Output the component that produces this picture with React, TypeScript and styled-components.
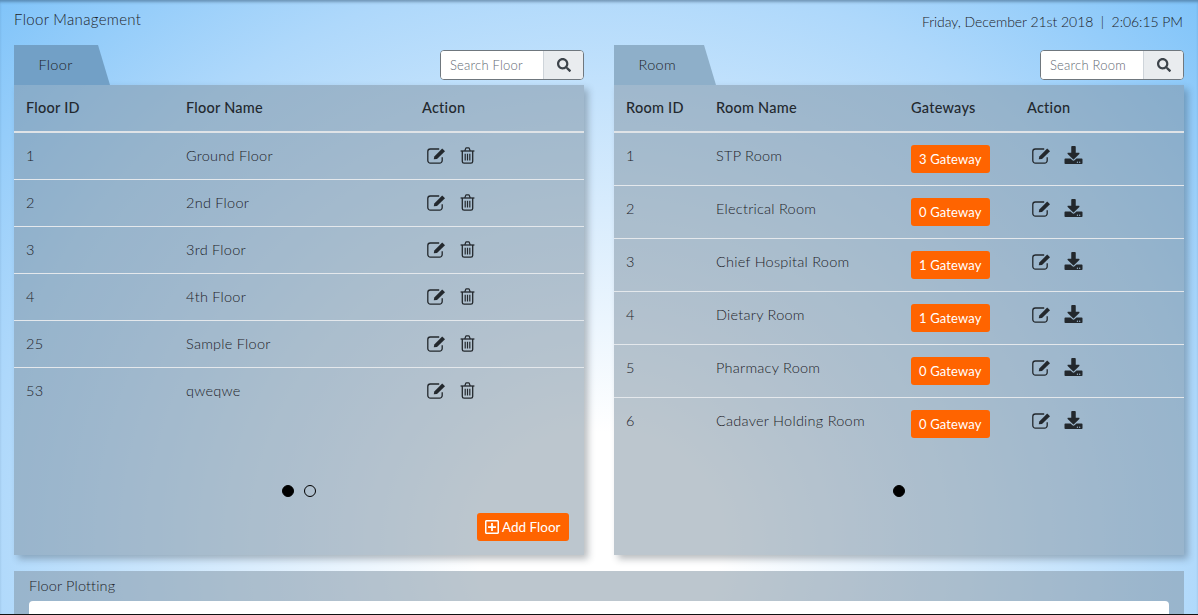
import React from "react";
import styled, { createGlobalStyle } from "styled-components";
import { FaDownload, FaSearch, FaRegPlusSquare } from "react-icons/fa";

const Global = createGlobalStyle`
  html, body { margin: 0; padding: 0; height: 615px; overflow: hidden; }
  body { font-family: "Lato", "Open Sans", sans-serif; color: #1d2329; }
  * { box-sizing: border-box; }
`;

const Page = styled.div`
  height: 615px;
  display: flex;
  flex-direction: column;
  overflow: hidden;
  padding-top: 10px;
  background: radial-gradient(ellipse 860px 800px at 599px 545px, #ffffff 0%, #ffffff 14%, #d8ecfd 42%, #aed8fb 72%, #7cc2f9 100%);
  box-shadow: inset 0 3px 3px -1px rgba(40, 70, 100, 0.45);
`;

const TopBar = styled.header`
  display: flex;
  justify-content: space-between;
  height: 35px;
  padding: 0 15px 0 14px;
`;

const PageTitle = styled.h1`
  margin: 0;
  font-size: 15px;
  line-height: 18px;
  font-weight: 300;
  letter-spacing: 0.32px;
`;

const DateText = styled.div`
  margin-top: 3px;
  font-size: 14px;
  line-height: 18px;
  font-weight: 300;
  letter-spacing: -0.05px;
  white-space: pre;
`;

const Columns = styled.div`
  display: grid;
  grid-template-columns: 570px 570px;
  column-gap: 30px;
  padding: 0 14px;
  height: 510px;
`;

const Column = styled.section`
  display: flex;
  flex-direction: column;
`;

const TabRow = styled.div`
  display: flex;
  justify-content: space-between;
  height: 40px;
`;

const Tab = styled.div<{ $w: number; $active?: boolean }>`
  width: ${(p) => p.$w}px;
  height: 40px;
  padding-left: 24.5px;
  font-size: 14.5px;
  font-weight: 300;
  line-height: 40px;
  letter-spacing: 0.3px;
  background: ${(p) => (p.$active ? "#72a0c6" : "#8eafc9")};
  clip-path: polygon(0 0, calc(100% - 12px) 0, 100% 100%, 0 100%);
`;

const Search = styled.div`
  display: flex;
  width: 144px;
  height: 30px;
  margin-top: 5px;
  border: 1px solid #6f777e;
  border-radius: 4px;
  overflow: hidden;
  background: #fff;
`;

const SearchInput = styled.input`
  flex: 1;
  min-width: 0;
  border: 0;
  outline: 0;
  padding: 0 9px;
  font-family: inherit;
  font-size: 13px;
  font-weight: 300;
  letter-spacing: 0.22px;
  &::placeholder { color: #5f6973; opacity: 1; }
`;

const SearchButton = styled.button`
  width: 40px;
  border: 0;
  border-left: 1px solid #ced4da;
  background: #e9ecef;
  color: #3d444b;
  display: flex;
  align-items: center;
  justify-content: center;
  font-size: 14px;
  padding: 0;
`;

const Panel = styled.div`
  flex: 1;
  display: flex;
  flex-direction: column;
  background: rgba(128, 147, 162, 0.53);
  box-shadow: 4px 4px 7px rgba(40, 50, 60, 0.32);
`;

const TableArea = styled.div`
  height: 400px;
`;

const HeadRow = styled.div<{ $cols: string }>`
  display: grid;
  grid-template-columns: ${(p) => p.$cols};
  align-items: center;
  height: 48px;
  padding-bottom: 2px;
  border-bottom: 2px solid #dfe3e7;
  font-size: 14.5px;
  font-weight: 500;
  letter-spacing: 0.25px;
  color: #23292f;
`;

const Row = styled.div<{ $cols: string; $h: number }>`
  display: grid;
  grid-template-columns: ${(p) => p.$cols};
  align-items: start;
  height: ${(p) => p.$h}px;
  padding-top: 14px;
  border-bottom: 1px solid #e4e8ec;
  font-size: 14.5px;
  line-height: 18px;
  font-weight: 300;
  letter-spacing: 0.25px;
  &:last-child { border-bottom: 0; }
`;

const Cell = styled.div`
  padding-left: 12px;
  white-space: nowrap;
`;

const BadgeCell = styled(Cell)`
  display: flex;
  height: 18px;
`;

const Actions = styled.div<{ $gap: number; $left: number }>`
  display: flex;
  align-items: center;
  gap: ${(p) => p.$gap}px;
  padding-left: ${(p) => p.$left}px;
  height: 18px;
  margin-top: -1px;
  color: #23282d;
`;

const IconSvg = styled.svg`
  display: block;
  flex: none;
`;

const EditIcon = () => (
  <IconSvg width="19" height="17" viewBox="0 0 19 17" fill="none">
    <path
      d="M15.2 10.2v3.3a2.6 2.6 0 0 1-2.6 2.6H3.4a2.6 2.6 0 0 1-2.6-2.6V4.6A2.6 2.6 0 0 1 3.4 2h8.8"
      stroke="currentColor"
      strokeWidth="1.3"
    />
    <path d="M6.8 12.2 7.3 9.5 15.2 1.4 18 4.2 10 12Z" fill="currentColor" />
  </IconSvg>
);

const TrashIcon = () => (
  <IconSvg width="15" height="17" viewBox="0 0 15 17" fill="none" stroke="currentColor">
    <path d="M0.6 4H14.4" strokeWidth="1.3" />
    <path d="M2.3 4V14.4a1.8 1.8 0 0 0 1.8 1.8h6.8a1.8 1.8 0 0 0 1.8-1.8V4" strokeWidth="1.3" />
    <path d="M4.8 4 5.6 1.6a1 1 0 0 1 .9-.7h2a1 1 0 0 1 .9.7L10.2 4" strokeWidth="1.2" />
    <path d="M5.2 6.8V13.6M7.5 6.8V13.6M9.8 6.8V13.6" strokeWidth="1.2" />
  </IconSvg>
);

const DownloadIcon = styled(FaDownload)`
  width: 19px;
  height: 18px;
  margin-left: 3px;
`;

const TrashSlot = styled.span`
  display: block;
  margin-left: 1px;
`;

const Badge = styled.span`
  display: inline-flex;
  flex: none;
  align-items: center;
  height: 28px;
  margin-top: -2px;
  padding: 0 8px;
  border-radius: 3px;
  background: #ff6400;
  color: #fff;
  font-size: 13px;
  font-weight: 400;
  letter-spacing: 0.15px;
`;

const Pager = styled.div`
  display: flex;
  justify-content: center;
  gap: 10px;
  height: 12px;
`;

const Dot = styled.span<{ $on?: boolean }>`
  width: 12px;
  height: 12px;
  border-radius: 50%;
  border: 1px solid #000;
  background: ${(p) => (p.$on ? "#000" : "transparent")};
`;

const PanelFooter = styled.div`
  display: flex;
  justify-content: flex-end;
  margin-top: 16px;
  padding-right: 15px;
`;

const AddButton = styled.button`
  display: flex;
  align-items: center;
  gap: 3px;
  height: 28px;
  width: 92px;
  padding: 0 0 0 8px;
  border: 0;
  border-radius: 3px;
  background: #ff6400;
  color: #fff;
  font-family: inherit;
  font-size: 13.5px;
  font-weight: 400;
  svg { width: 14px; height: 16px; }
`;

const PlotPanel = styled.section`
  margin: 16px 14px 0;
  flex: 1;
  padding: 6px 15px 0;
  overflow: hidden;
  background: rgba(128, 147, 162, 0.53);
`;

const PlotTitle = styled.div`
  height: 24px;
  font-size: 14.5px;
  font-weight: 300;
  line-height: 18px;
  letter-spacing: 0.15px;
`;

const PlotBody = styled.div`
  height: 40px;
  background: #fff;
  border-radius: 4px 4px 0 0;
`;

const BottomLine = styled.div`
  height: 1px;
  flex: none;
  background: #111;
`;

const floors: [string, string][] = [
  ["1", "Ground Floor"],
  ["2", "2nd Floor"],
  ["3", "3rd Floor"],
  ["4", "4th Floor"],
  ["25", "Sample Floor"],
  ["53", "qweqwe"],
];

const rooms: [string, string, string][] = [
  ["1", "STP Room", "3 Gateway"],
  ["2", "Electrical Room", "0 Gateway"],
  ["3", "Chief Hospital Room", "1 Gateway"],
  ["4", "Dietary Room", "1 Gateway"],
  ["5", "Pharmacy Room", "0 Gateway"],
  ["6", "Cadaver Holding Room", "0 Gateway"],
];

const floorCols = "160px 236px 1fr";
const roomCols = "90px 195px 116px 1fr";

export default function App() {
  return (
    <Page>
      <Global />
      <TopBar>
        <PageTitle>Floor Management</PageTitle>
        <DateText>Friday, December 21st 2018  |  2:06:15 PM</DateText>
      </TopBar>
      <Columns>
        <Column>
          <TabRow>
            <Tab $w={96} $active>Floor</Tab>
            <Search>
              <SearchInput placeholder="Search Floor" />
              <SearchButton><FaSearch /></SearchButton>
            </Search>
          </TabRow>
          <Panel>
            <TableArea>
              <HeadRow $cols={floorCols}>
                <Cell>Floor ID</Cell>
                <Cell>Floor Name</Cell>
                <Cell>Action</Cell>
              </HeadRow>
              {floors.map(([id, name]) => (
                <Row key={id} $cols={floorCols} $h={47}>
                  <Cell>{id}</Cell>
                  <Cell>{name}</Cell>
                  <Actions $gap={13} $left={17}>
                    <EditIcon />
                    <TrashSlot><TrashIcon /></TrashSlot>
                  </Actions>
                </Row>
              ))}
            </TableArea>
            <Pager>
              <Dot $on />
              <Dot />
            </Pager>
            <PanelFooter>
              <AddButton><FaRegPlusSquare />Add Floor</AddButton>
            </PanelFooter>
          </Panel>
        </Column>
        <Column>
          <TabRow>
            <Tab $w={102}>Room</Tab>
            <Search>
              <SearchInput placeholder="Search Room" />
              <SearchButton><FaSearch /></SearchButton>
            </Search>
          </TabRow>
          <Panel>
            <TableArea>
              <HeadRow $cols={roomCols}>
                <Cell>Room ID</Cell>
                <Cell>Room Name</Cell>
                <Cell>Gateways</Cell>
                <Cell>Action</Cell>
              </HeadRow>
              {rooms.map(([id, name, gw]) => (
                <Row key={id} $cols={roomCols} $h={53}>
                  <Cell>{id}</Cell>
                  <Cell>{name}</Cell>
                  <BadgeCell><Badge>{gw}</Badge></BadgeCell>
                  <Actions $gap={10} $left={17}>
                    <EditIcon />
                    <DownloadIcon />
                  </Actions>
                </Row>
              ))}
            </TableArea>
            <Pager>
              <Dot $on />
            </Pager>
          </Panel>
        </Column>
      </Columns>
      <PlotPanel>
        <PlotTitle>Floor Plotting</PlotTitle>
        <PlotBody />
      </PlotPanel>
      <BottomLine />
    </Page>
  );
}
